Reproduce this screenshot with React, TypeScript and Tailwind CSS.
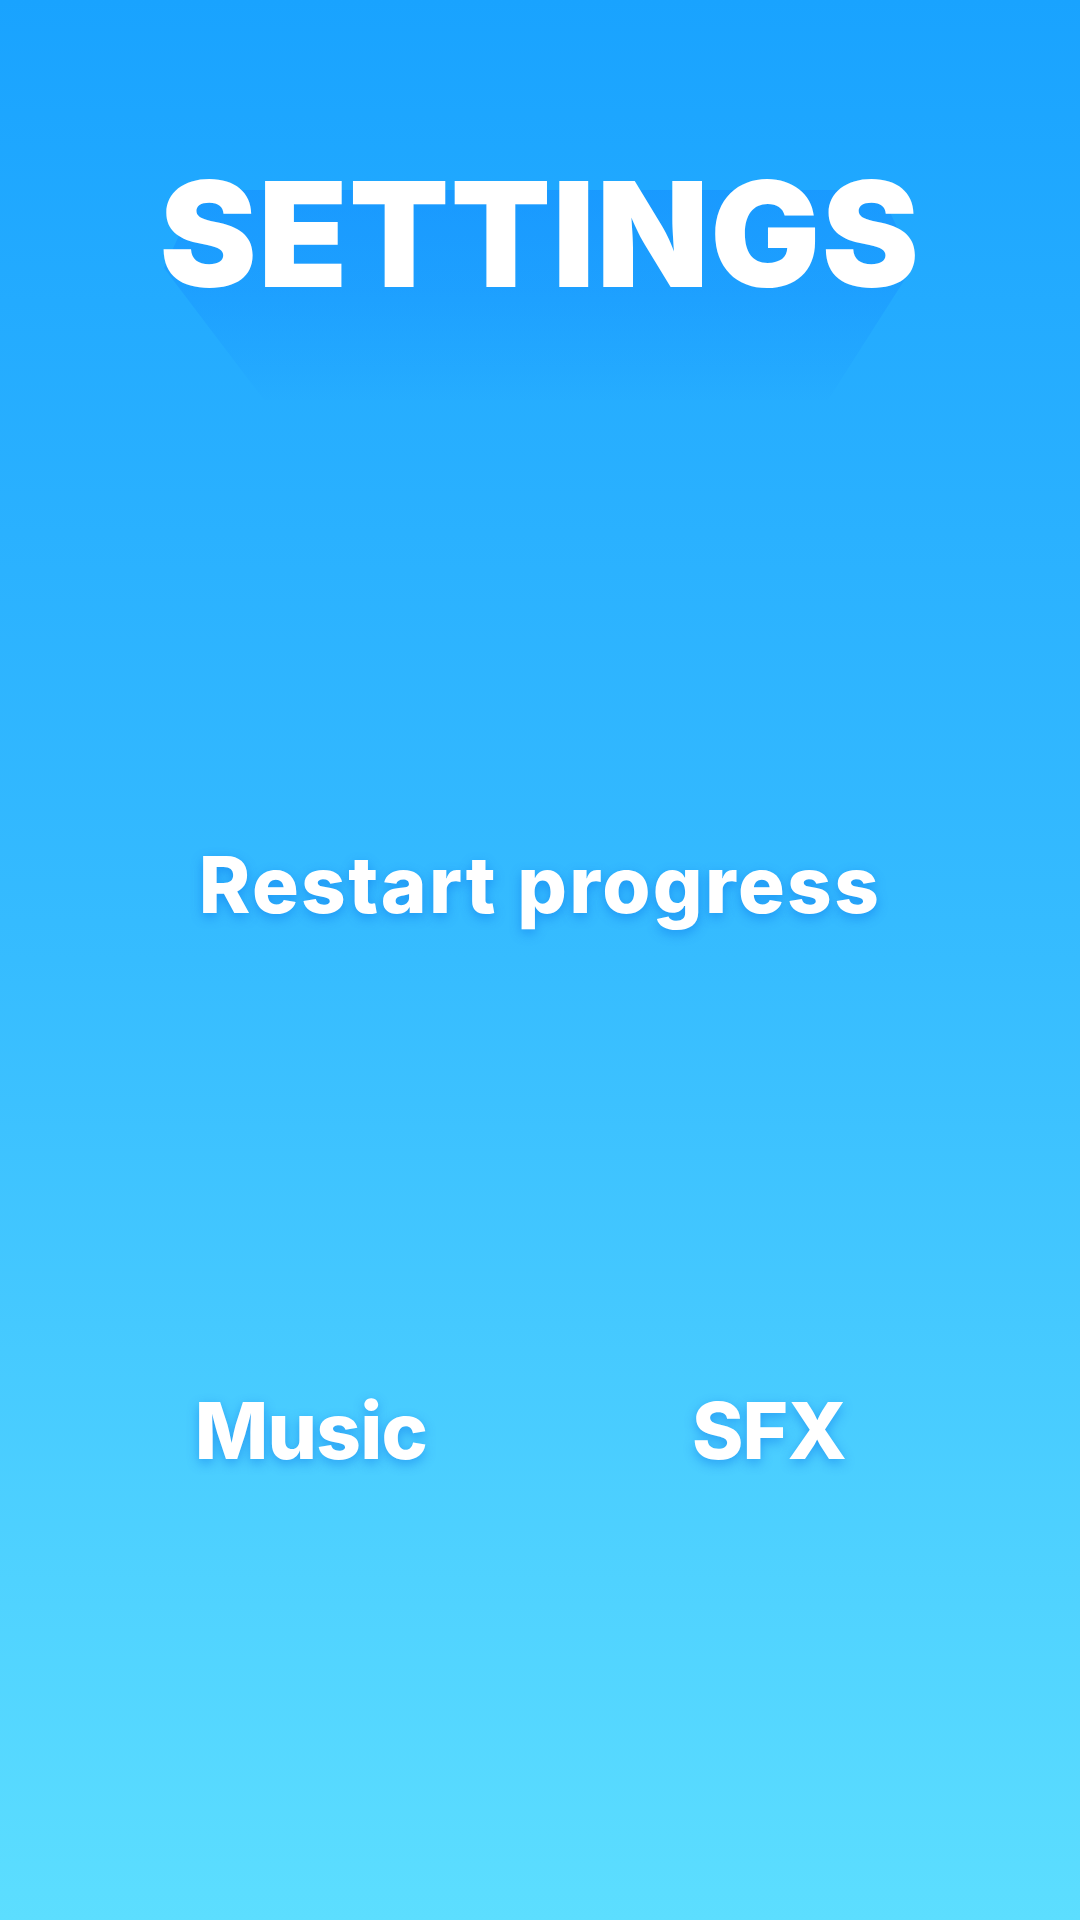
export default function App() {
  return (
    <div className="relative min-h-[1920px] w-full overflow-hidden bg-gradient-to-b from-[#19a3ff] via-[#36bcff] to-[#5cdeff] font-['Inter','Liberation_Sans',sans-serif] text-white">
      {/* long shadow behind title */}
      <svg className="pointer-events-none absolute left-0 top-0" width="1080" height="460" viewBox="0 0 1080 460">
        <defs>
          <linearGradient id="ls" x1="0" y1="185" x2="0" y2="410" gradientUnits="userSpaceOnUse">
            <stop offset="0" stopColor="#0a78ff" stopOpacity="0.3" />
            <stop offset="0.45" stopColor="#0a78ff" stopOpacity="0.22" />
            <stop offset="1" stopColor="#0a78ff" stopOpacity="0" />
          </linearGradient>
        </defs>
        <polygon points="200,190 880,190 914,265 828,400 264,400 164,268" fill="url(#ls)" />
      </svg>

      <div className="relative flex flex-col items-center">
        <h1 className="mt-[161px] text-[146px] font-black leading-none tracking-[0.01em]">SETTINGS</h1>

        <button className="mt-[539px] text-[78px] font-extrabold leading-none tracking-[0.03em] [text-shadow:0_4px_12px_rgba(0,105,230,0.45)]">
          Restart progress
        </button>

        <div className="mt-[468px] grid w-[916px] grid-cols-2">
          <button className="text-center text-[78px] font-extrabold leading-none tracking-[-0.01em] [text-shadow:0_4px_12px_rgba(0,105,230,0.45)]">
            Music
          </button>
          <button className="text-center text-[78px] font-extrabold leading-none tracking-[-0.01em] [text-shadow:0_4px_12px_rgba(0,105,230,0.45)]">
            SFX
          </button>
        </div>
      </div>
    </div>
  );
}
